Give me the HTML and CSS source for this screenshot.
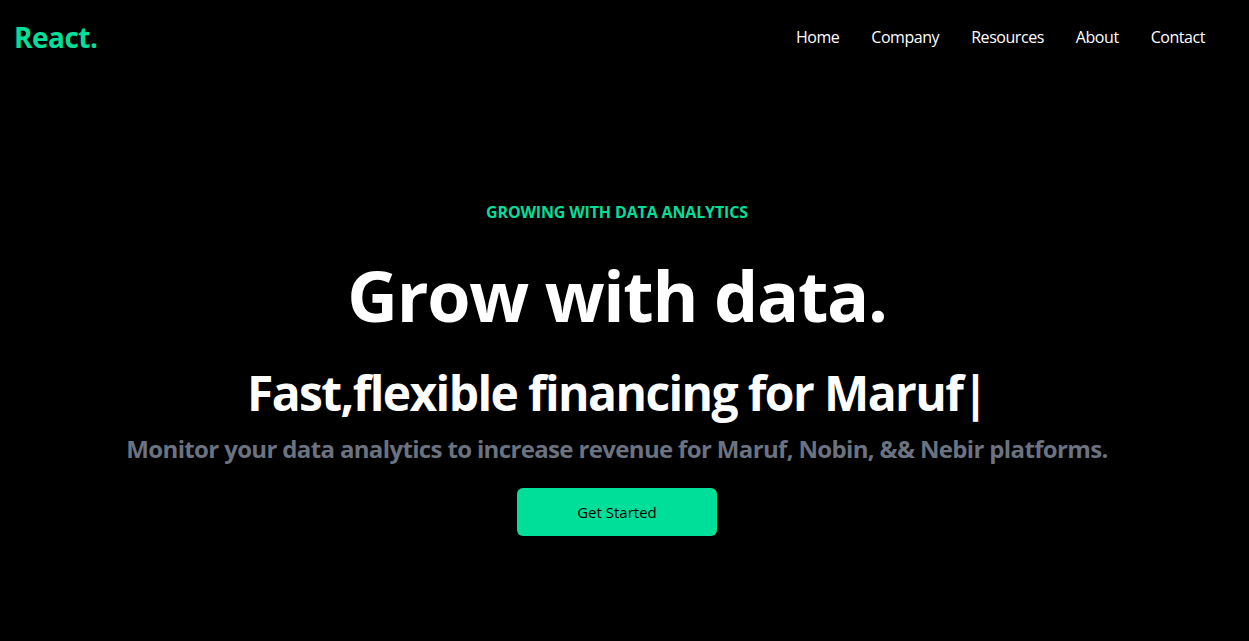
FILE: index.html
```html
<!DOCTYPE html>
<html lang="en">
<head>
<meta charset="utf-8">
<title>React.</title>
<link rel="stylesheet" href="styles.css">
</head>
<body>
<header class="nav">
  <h1 class="logo">React.</h1>
  <ul class="menu">
    <li>Home</li>
    <li>Company</li>
    <li>Resources</li>
    <li>About</li>
    <li>Contact</li>
  </ul>
</header>
<main class="hero">
  <p class="eyebrow">GROWING WITH DATA ANALYTICS</p>
  <h2 class="title">Grow with data.</h2>
  <p class="typed">Fast,flexible financing for Maruf<span class="cursor">|</span></p>
  <p class="lead">Monitor your data analytics to increase revenue for Maruf, Nobin, &amp;&amp; Nebir platforms.</p>
  <button class="cta">Get Started</button>
</main>
</body>
</html>
```

FILE: styles.css
```css
* { box-sizing: border-box; }
html, body { margin: 0; padding: 0; }
body {
  background: #000;
  color: #fff;
  font-family: "Open Sans", "Noto Sans", sans-serif;
  width: 1249px;
  height: 641px;
  overflow: hidden;
}
.nav {
  display: flex;
  justify-content: space-between;
  align-items: center;
  height: 74px;
  padding: 0 28px 0 14px;
}
.logo {
  margin: 0;
  font-size: 28px;
  font-weight: 700;
  color: #00df9a;
  letter-spacing: -0.5px;
}
.menu {
  list-style: none;
  display: flex;
  margin: 0;
  padding: 0;
}
.menu li {
  padding: 0 16px;
  font-size: 16px;
  letter-spacing: -0.45px;
}
.hero {
  display: flex;
  flex-direction: column;
  align-items: center;
  text-align: center;
  padding: 126px 15px 0 0;
}
.eyebrow {
  margin: 0;
  color: #00df9a;
  font-weight: 700;
  font-size: 16px;
  line-height: 24px;
  letter-spacing: -0.15px;
}
.title {
  margin: 31px 0 0;
  font-size: 70px;
  line-height: 80px;
  font-weight: 700;
  letter-spacing: -1.3px;
}
.typed {
  margin: 30px 0 0;
  font-size: 48px;
  line-height: 56px;
  font-weight: 700;
  letter-spacing: -1.6px;
}
.lead {
  margin: 12px 0 0;
  font-size: 24px;
  line-height: 32px;
  font-weight: 700;
  color: #6b7280;
  letter-spacing: -0.65px;
}
.cta {
  margin-top: 23px;
  width: 200px;
  height: 48px;
  border: 0;
  border-radius: 6px;
  background: #00df9a;
  color: #000;
  font-family: inherit;
  font-size: 15px;
}
```
